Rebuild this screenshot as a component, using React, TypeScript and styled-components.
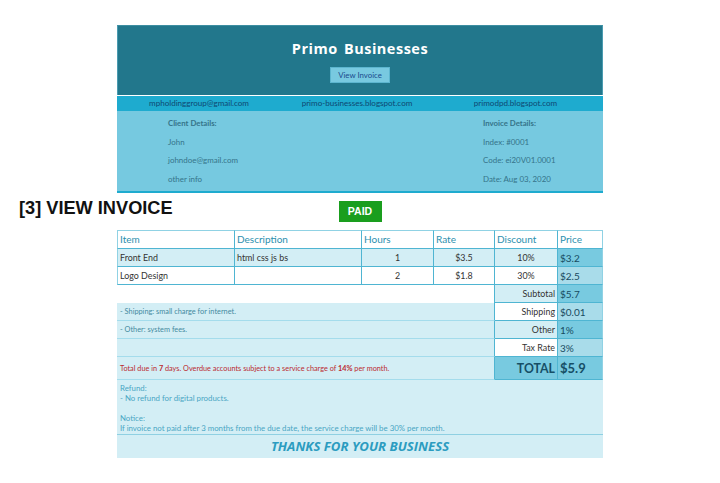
import React from "react";
import styled, { createGlobalStyle } from "styled-components";

const Global = createGlobalStyle`
  html, body { margin: 0; padding: 0; background: #fff; }
  body { font-family: Lato, "Liberation Sans", sans-serif; }
`;
const Page = styled.div`
  width: 720px;
  height: 483px;
  padding-top: 25px;
  box-sizing: border-box;
  overflow: hidden;
`;
const Sheet = styled.section`
  width: 486px;
  margin: 0 auto;
`;
const Banner = styled.header`
  height: 70px;
  background: #22778c;
  box-sizing: border-box;
  padding-top: 13px;
  display: flex;
  flex-direction: column;
  align-items: center;
  border-top: 1px solid #3d8ea1;
  border-left: 1px solid #4a9bb0;
  border-right: 1px solid #4a9bb0;
`;
const Title = styled.h1`
  margin: 0;
  font: 700 14.5px/20px "Open Sans", sans-serif;
  letter-spacing: 0.5px;
  word-spacing: 2px;
  color: #fff;
`;
const ViewButton = styled.button`
  margin-top: 8px;
  width: 60px;
  height: 16px;
  padding: 0;
  background: #78c9e0;
  border: 1px solid #5cb5cf;
  color: #1b4a8c;
  font: 400 7.8px/14px Lato, sans-serif;
`;
const Contacts = styled.div`
  margin-top: 1px;
  height: 15px;
  background: #1eabcf;
  display: grid;
  grid-template-columns: 164px 152px 165px;
  justify-items: center;
  align-items: center;
  color: #0e4872;
  font-size: 8.05px;
  line-height: 15px;
`;
const Details = styled.div`
  height: 82px;
  box-sizing: border-box;
  background: #76c9e0;
  border-bottom: 2px solid #1eabcf;
  padding: 3px 0 0 51px;
  display: flex;
  color: #35748a;
  font-size: 7.95px;
`;
const DetailColumn = styled.div<{ $width: number }>`
  width: ${(p) => p.$width}px;
`;
const DetailLine = styled.div<{ $head?: boolean }>`
  height: 18.5px;
  line-height: 18.5px;
  font-weight: ${(p) => (p.$head ? 700 : 400)};
  font-size: ${(p) => (p.$head ? "7.8px" : "inherit")};
`;
const StatusRow = styled.div`
  height: 37px;
  display: grid;
  grid-template-columns: 1fr auto 1fr;
  align-items: start;
`;
const Heading = styled.h2`
  margin: 4px 0 0 19px;
  font: 700 18.2px/22px "Liberation Sans", Arial, sans-serif;
  color: #111;
  white-space: nowrap;
`;
const PaidBadge = styled.div`
  margin-top: 8px;
  width: 43px;
  height: 21px;
  background: #1a9e1e;
  color: #fff;
  font: 700 10.5px/21px "Liberation Sans", Arial, sans-serif;
  text-align: center;
`;
const Table = styled.table`
  width: 486px;
  table-layout: fixed;
  border-collapse: separate;
  border-spacing: 0;
  font-size: 8.9px;
  color: #333;
`;
const HeadCell = styled.th`
  height: 19px;
  padding: 0 2px 1px;
  box-sizing: border-box;
  text-align: left;
  font-weight: 400;
  font-size: 10px;
  color: #2c8fae;
  background: #fff;
  border-style: solid;
  border-width: 1px 1px 1px 0;
  border-color: #90d2e4 #4fb5d2 #4fb5d2 #90d2e4;
  &:first-child { border-left-width: 1px; }
  &:last-child { border-right-color: #90d2e4; }
`;
const Cell = styled.td<{ $shade?: boolean; $center?: boolean }>`
  height: 18px;
  padding: 0 2px;
  box-sizing: border-box;
  background: ${(p) => (p.$shade ? "#d3eef5" : "#fff")};
  text-align: ${(p) => (p.$center ? "center" : "left")};
  border-style: solid;
  border-width: 0 1px 1px 0;
  border-color: #4fb5d2;
  &:first-child { border-left: 1px solid #90d2e4; }
`;
const LabelCell = styled.td<{ $shade?: boolean }>`
  height: 18px;
  padding: 0 2px;
  box-sizing: border-box;
  background: ${(p) => (p.$shade ? "#d3eef5" : "#fff")};
  text-align: right;
  border-style: solid;
  border-width: 0 1px 1px 0;
  border-color: #4fb5d2;
`;
const PriceCell = styled.td<{ $dark?: boolean }>`
  height: 18px;
  padding: 0 2px;
  box-sizing: border-box;
  font-size: 10px;
  color: #174a60;
  background: ${(p) => (p.$dark ? "#78cae0" : "#a9dcea")};
  border-style: solid;
  border-width: 0 1px 1px 0;
  border-color: #4fb5d2 #90d2e4 #4fb5d2 #4fb5d2;
`;
const NoteCell = styled.td<{ $height?: number }>`
  height: ${(p) => p.$height ?? 18}px;
  padding: 0 3px;
  box-sizing: border-box;
  background: #d3eef5;
  font-size: 7.35px;
  color: #448a9f;
  border-bottom: 1px solid #a4dcec;
  border-right: 1px solid #4fb5d2;
`;
const DueNote = styled.span`
  color: #bb2a30;
  font-size: 7.3px;
  b { font-weight: 700; }
`;
const BlankCell = styled.td`
  height: 18px;
  background: #fff;
  padding: 0;
  box-sizing: border-box;
  border-right: 1px solid #4fb5d2;
`;
const TotalLabel = styled.td`
  height: 23px;
  padding: 0 2px;
  box-sizing: border-box;
  background: #78cae0;
  border-style: solid;
  border-width: 0 1px 1px 0;
  border-color: #4fb5d2;
  text-align: right;
  font-size: 12.3px;
  font-weight: 700;
  color: #164f66;
`;
const TotalValue = styled(TotalLabel)`
  text-align: left;
  font-size: 13px;
  border-right-color: #90d2e4;
`;
const Terms = styled.div`
  height: 55px;
  box-sizing: border-box;
  background: #d3eef5;
  padding: 3px 3px 0;
  font-size: 7.85px;
  line-height: 10px;
  color: #4aa6c4;
  border-bottom: 1px solid #8fd0e2;
`;
const TermLine = styled.div`
  height: 10px;
  white-space: nowrap;
`;
const Thanks = styled.div`
  height: 23px;
  background: #d3eef5;
  text-align: center;
  font: italic 700 13.2px/23px "Open Sans", sans-serif;
  color: #2b9cc0;
`;

const widths = [118, 127, 72, 61, 63, 45];
const items = [
  { item: "Front End", desc: "html css js bs", hours: "1", rate: "$3.5", disc: "10%", price: "$3.2", shade: true },
  { item: "Logo Design", desc: "", hours: "2", rate: "$1.8", disc: "30%", price: "$2.5", shade: false },
];

export default function App() {
  return (
    <Page>
      <Global />
      <Sheet>
        <Banner>
          <Title>Primo Businesses</Title>
          <ViewButton>View Invoice</ViewButton>
        </Banner>
        <Contacts>
          <span>mpholdinggroup@gmail.com</span>
          <span>primo-businesses.blogspot.com</span>
          <span>primodpd.blogspot.com</span>
        </Contacts>
        <Details>
          <DetailColumn $width={315}>
            <DetailLine $head>Client Details:</DetailLine>
            <DetailLine>John</DetailLine>
            <DetailLine>johndoe@gmail.com</DetailLine>
            <DetailLine>other info</DetailLine>
          </DetailColumn>
          <DetailColumn $width={110}>
            <DetailLine $head>Invoice Details:</DetailLine>
            <DetailLine>Index: #0001</DetailLine>
            <DetailLine>Code: ei20V01.0001</DetailLine>
            <DetailLine>Date: Aug 03, 2020</DetailLine>
          </DetailColumn>
        </Details>
      </Sheet>
      <StatusRow>
        <Heading>[3] VIEW INVOICE</Heading>
        <PaidBadge>PAID</PaidBadge>
        <span />
      </StatusRow>
      <Sheet>
        <Table>
          <colgroup>
            {widths.map((w, i) => (
              <col key={i} width={w} />
            ))}
          </colgroup>
          <thead>
            <tr>
              {["Item", "Description", "Hours", "Rate", "Discount", "Price"].map((h) => (
                <HeadCell key={h}>{h}</HeadCell>
              ))}
            </tr>
          </thead>
          <tbody>
            {items.map((r, i) => (
              <tr key={r.item}>
                <Cell $shade={r.shade}>{r.item}</Cell>
                <Cell $shade={r.shade}>{r.desc}</Cell>
                <Cell $shade={r.shade} $center>{r.hours}</Cell>
                <Cell $shade={r.shade} $center>{r.rate}</Cell>
                <Cell $shade={r.shade} $center>{r.disc}</Cell>
                <PriceCell $dark={i === 0}>{r.price}</PriceCell>
              </tr>
            ))}
            <tr>
              <BlankCell colSpan={4} />
              <LabelCell $shade>Subtotal</LabelCell>
              <PriceCell $dark>$5.7</PriceCell>
            </tr>
            <tr>
              <NoteCell colSpan={4}>- Shipping: small charge for internet.</NoteCell>
              <LabelCell>Shipping</LabelCell>
              <PriceCell>$0.01</PriceCell>
            </tr>
            <tr>
              <NoteCell colSpan={4}>- Other: system fees.</NoteCell>
              <LabelCell $shade>Other</LabelCell>
              <PriceCell $dark>1%</PriceCell>
            </tr>
            <tr>
              <NoteCell colSpan={4} />
              <LabelCell>Tax Rate</LabelCell>
              <PriceCell>3%</PriceCell>
            </tr>
            <tr>
              <NoteCell colSpan={4} $height={23}>
                <DueNote>
                  Total due in <b>7</b> days. Overdue accounts subject to a service charge of <b>14%</b> per month.
                </DueNote>
              </NoteCell>
              <TotalLabel>TOTAL</TotalLabel>
              <TotalValue>$5.9</TotalValue>
            </tr>
          </tbody>
        </Table>
        <Terms>
          <TermLine>Refund:</TermLine>
          <TermLine>- No refund for digital products.</TermLine>
          <TermLine />
          <TermLine>Notice:</TermLine>
          <TermLine>If invoice not paid after 3 months from the due date, the service charge will be 30% per month.</TermLine>
        </Terms>
        <Thanks>THANKS FOR YOUR BUSINESS</Thanks>
      </Sheet>
    </Page>
  );
}
